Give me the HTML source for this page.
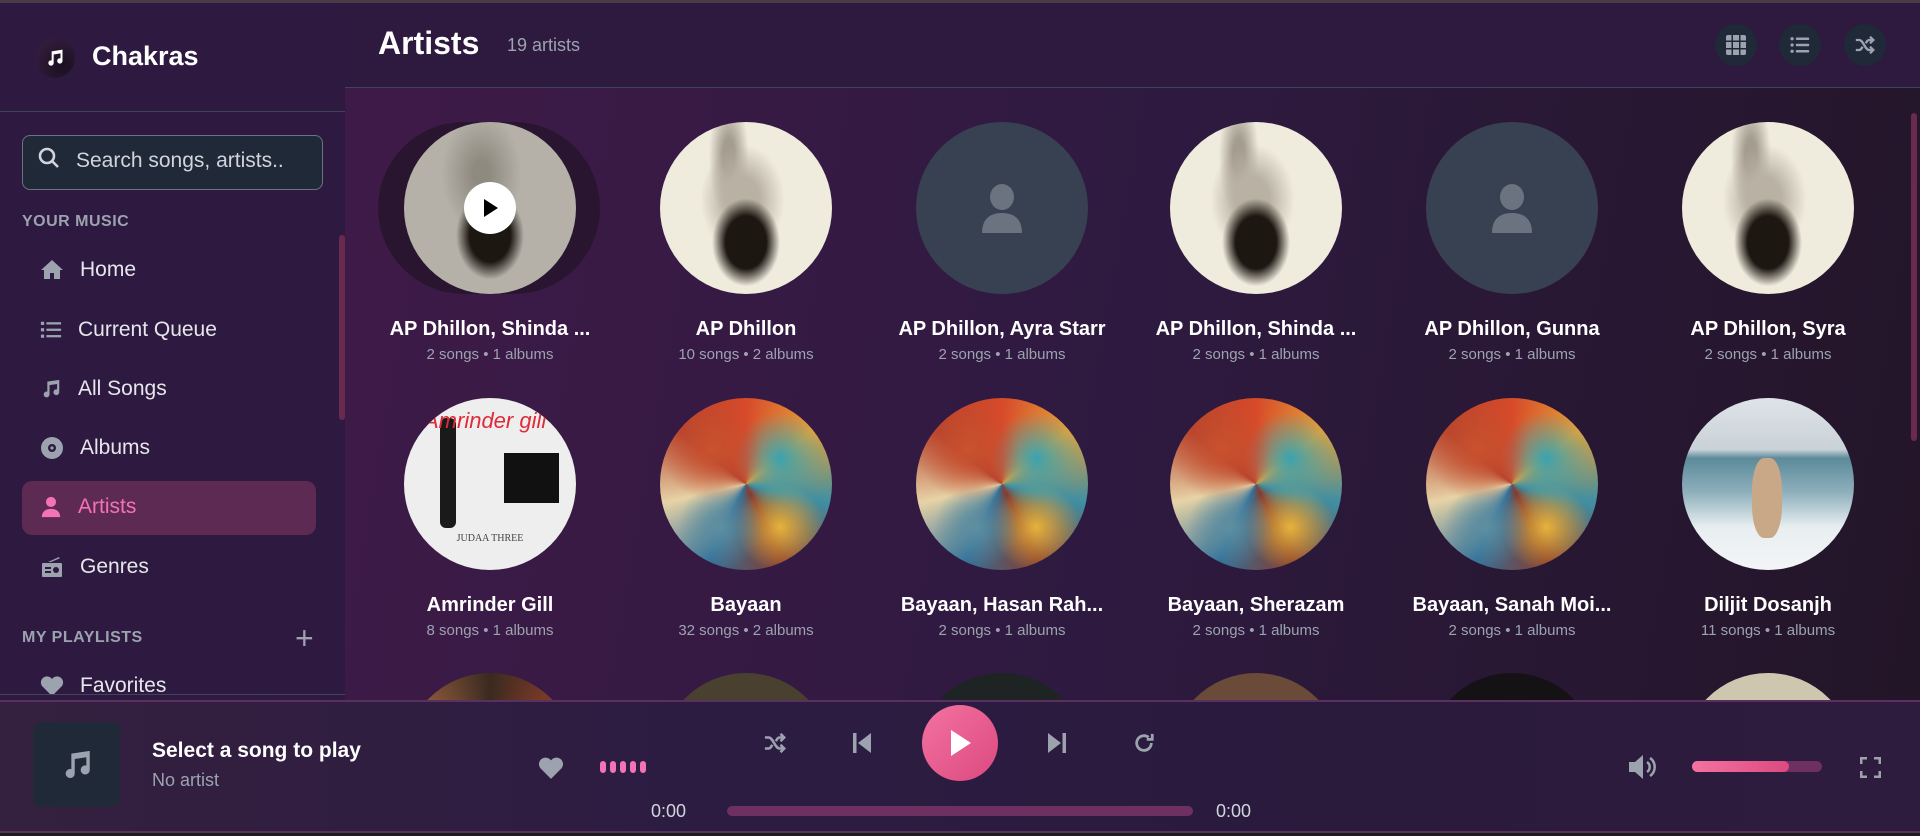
<!DOCTYPE html>
<html><head><meta charset="utf-8"><style>
*{margin:0;padding:0;box-sizing:border-box}
body{width:1920px;height:836px;overflow:hidden;font-family:"Liberation Sans",sans-serif;background:#1a1a1a;position:relative;color:#fff}
.abs{position:absolute}
#topline{left:0;top:0;width:1920px;height:3px;background:#4a3a48}
#side{left:0;top:3px;width:345px;height:697px;background:#2e1a40}
#main{left:345px;top:3px;width:1575px;height:697px;background:linear-gradient(100deg,#3f1a48 0%,#2e1a40 50%,#231528 100%);overflow:hidden}
#mainhead{left:345px;top:3px;width:1575px;height:85px;background:#2d1a3e;border-bottom:1px solid #3c4656}
.nav{position:absolute;left:40px;font-size:21px;color:#e5e7eb;display:flex;align-items:center}
.nav svg{margin-right:16px}
.card{position:absolute;width:256px;text-align:center}
.circ{width:172px;height:172px;border-radius:50%;margin:0 auto;overflow:hidden;position:relative}
.nm{font-size:20px;font-weight:bold;margin-top:24px;white-space:nowrap;color:#fff}
.sb{font-size:15px;color:#9ca3af;margin-top:5px}
.face{background:radial-gradient(ellipse 34px 44px at 50% 70%,#1d1712 60%,transparent 100%),radial-gradient(ellipse 42px 55px at 48% 45%,#b9b1a3 40%,transparent 100%),radial-gradient(ellipse 20px 60px at 40% 20%,#a39c8f 30%,transparent 100%),#efebdd}
.face2{background:radial-gradient(ellipse 34px 44px at 50% 66%,#1d1712 60%,transparent 100%),radial-gradient(ellipse 40px 60px at 45% 30%,#8f8a80 20%,transparent 100%),#b5b1a8}
.ph{background:#374151;display:flex;align-items:center;justify-content:center}
.safar{background:radial-gradient(circle at 30% 30%,#c9522e 0,transparent 30%),radial-gradient(circle at 70% 35%,#3aa2b0 0,transparent 28%),radial-gradient(circle at 35% 75%,#5e8fa0 0,transparent 25%),radial-gradient(circle at 70% 75%,#e6b23c 0,transparent 25%),conic-gradient(#d74a2a,#e5a23a,#3f8fa3,#8a3a2a,#2f6f9a,#e7d3a6,#b3402c,#d74a2a)}
.btn{position:absolute;width:42px;height:42px;border-radius:50%;background:#1f2937;display:flex;align-items:center;justify-content:center}
.r3{position:absolute;top:670px;width:172px;height:172px;border-radius:50%}
</style></head><body>
<div class="abs" id="topline"></div>
<div class="abs" id="side"></div>
<div class="abs" id="main">
<div class="r3" style="left:59px;background:conic-gradient(#3a2a20,#c04a30,#2a5a90,#d08050,#3a2a20)"></div>
<div class="r3" style="left:315px;background:#4a4030"></div>
<div class="r3" style="left:571px;background:#1e2424"></div>
<div class="r3" style="left:825px;background:#6a4a38"></div>
<div class="r3" style="left:1081px;background:#151215"></div>
<div class="r3" style="left:1337px;background:#cfc6b0"></div>
</div>
<div class="abs" id="mainhead"></div>
<div class="abs" style="left:0;top:111px;width:345px;height:1px;background:#3c4656"></div>
<div class="abs" style="left:35px;top:38px;width:40px;height:40px;border-radius:50%;background:radial-gradient(circle at 70% 70%,#1a0f1f,#3a2046);display:flex;align-items:center;justify-content:center">
<svg width="20" height="20" viewBox="0 0 24 24" fill="#fff"><path d="M8 4l13-2v13.5a3.2 3.2 0 1 1-2.4-3.1V6.5L10.4 7.8V18a3.2 3.2 0 1 1-2.4-3.1z"/></svg></div>
<div class="abs" style="left:92px;top:41px;font-size:27px;font-weight:bold">Chakras</div>
<div class="abs" style="left:22px;top:135px;width:301px;height:55px;border:1px solid #6b7280;border-radius:8px;background:#1f2937"></div>
<svg class="abs" style="left:37px;top:146px" width="24" height="24" viewBox="0 0 24 24" fill="none" stroke="#d1d5db" stroke-width="2.6"><circle cx="10" cy="10" r="7"/><path d="M15 15l6 6"/></svg>
<div class="abs" style="left:76px;top:149px;font-size:21px;color:#d1d5db">Search songs, artists..</div>
<div class="abs" style="left:22px;top:213px;font-size:16px;font-weight:bold;color:#9ca3af;letter-spacing:.5px">YOUR MUSIC</div>
<div class="abs" style="left:339px;top:235px;width:6px;height:185px;border-radius:3px;background:#6a2a50"></div>
<div class="abs" style="left:22px;top:481px;width:294px;height:54px;border-radius:10px;background:#5c2a52"></div>
<div class="nav" style="top:258px"><svg width="24" height="24" viewBox="0 0 24 24" fill="#9ca3af"><path d="M12 2L1 12h3v9h6v-6h4v6h6v-9h3z"/></svg>Home</div>
<div class="nav" style="top:318px"><svg width="22" height="22" viewBox="0 0 24 24" fill="#9ca3af"><rect x="1" y="3" width="3.5" height="3.5"/><rect x="1" y="10" width="3.5" height="3.5"/><rect x="1" y="17" width="3.5" height="3.5"/><rect x="7" y="3.5" width="16" height="2.5"/><rect x="7" y="10.5" width="16" height="2.5"/><rect x="7" y="17.5" width="16" height="2.5"/></svg>Current Queue</div>
<div class="nav" style="top:377px"><svg width="22" height="24" viewBox="0 0 24 24" fill="#9ca3af"><path d="M8 4l13-2v13.5a3.2 3.2 0 1 1-2.4-3.1V6.5L10.4 7.8V18a3.2 3.2 0 1 1-2.4-3.1z"/></svg>All Songs</div>
<div class="nav" style="top:436px"><svg width="24" height="24" viewBox="0 0 24 24"><circle cx="12" cy="12" r="11" fill="#9ca3af"/><circle cx="12" cy="12" r="4" fill="#2e1a40"/><circle cx="12" cy="12" r="1.6" fill="#9ca3af"/></svg>Albums</div>
<div class="nav" style="top:495px;color:#f472b6"><svg width="22" height="24" viewBox="0 0 24 24" fill="#f472b6"><circle cx="12" cy="6.5" r="5.5"/><path d="M2 23c0-6 4-9 10-9s10 3 10 9z"/></svg>Artists</div>
<div class="nav" style="top:555px"><svg width="24" height="24" viewBox="0 0 24 24" fill="#9ca3af"><path d="M3 8h18a1 1 0 0 1 1 1v12a1 1 0 0 1-1 1H3a1 1 0 0 1-1-1V9a1 1 0 0 1 1-1zM8 7l11-5 .6 1.4L11 7z"/><circle cx="16" cy="15" r="3" fill="#2e1a40"/><rect x="5" y="12" width="6" height="2" fill="#2e1a40"/><rect x="5" y="16" width="6" height="2" fill="#2e1a40"/></svg>Genres</div>
<div class="abs" style="left:22px;top:629px;font-size:16px;font-weight:bold;color:#9ca3af;letter-spacing:.5px">MY PLAYLISTS</div>
<div class="abs" style="left:295px;top:622px;font-size:32px;color:#9ca3af;line-height:32px">+</div>
<div style="position:absolute;left:0;top:672px;width:345px;height:22px;overflow:hidden"><div class="nav" style="top:2px"><svg width="24" height="22" viewBox="0 0 24 22" fill="#9ca3af"><path d="M12 21L2 11a6 6 0 0 1 10-7 6 6 0 0 1 10 7z"/></svg>Favorites</div></div>
<div class="abs" style="left:0;top:694px;width:345px;height:1px;background:#3c4656"></div>
<div class="abs" style="left:378px;top:25px;font-size:32px;font-weight:bold">Artists</div>
<div class="abs" style="left:507px;top:35px;font-size:18px;color:#9ca3af">19 artists</div>
<div class="btn" style="left:1715px;top:24px"><svg width="20" height="20" viewBox="0 0 20 20" fill="#9ca3af"><rect x="0" y="0" width="20" height="20" rx="2"/><g fill="#1f2937"><rect x="5.5" y="0" width="1.5" height="20"/><rect x="13" y="0" width="1.5" height="20"/><rect x="0" y="5.5" width="20" height="1.5"/><rect x="0" y="13" width="20" height="1.5"/></g></svg></div>
<div class="btn" style="left:1779px;top:24px"><svg width="20" height="20" viewBox="0 0 24 24" fill="#9ca3af"><circle cx="2.5" cy="4.5" r="2"/><circle cx="2.5" cy="12" r="2"/><circle cx="2.5" cy="19.5" r="2"/><rect x="7" y="3" width="16" height="3" rx="1"/><rect x="7" y="10.5" width="16" height="3" rx="1"/><rect x="7" y="18" width="16" height="3" rx="1"/></svg></div>
<div class="btn" style="left:1844px;top:24px"><svg width="20" height="20" viewBox="0 0 24 24" fill="none" stroke="#9ca3af" stroke-width="2.8"><path d="M1 6h4c5 0 7 12 12 12h4M1 18h4c2 0 3-2 4-4M13 10c1-2 2-4 4-4h4"/><path d="M18 2l4 4-4 4M18 14l4 4-4 4"/></svg></div>
<div class="abs" style="left:1911px;top:113px;width:6px;height:328px;border-radius:3px;background:#6a2a50"></div>
<div class="abs" style="left:378px;top:122px;width:222px;height:172px;border-radius:86px;background:#2a1530"></div>
<div class="card" style="left:362px;top:122px"><div class="circ face2"><div style="position:absolute;left:60px;top:60px;width:52px;height:52px;border-radius:50%;background:#fff"><svg style="position:absolute;left:19px;top:16px" width="16" height="20" viewBox="0 0 16 20"><path d="M1 1l14 9-14 9z" fill="#000"/></svg></div></div><div class="nm">AP Dhillon, Shinda ...</div><div class="sb">2 songs • 1 albums</div></div>
<div class="card" style="left:618px;top:122px"><div class="circ face"></div><div class="nm">AP Dhillon</div><div class="sb">10 songs • 2 albums</div></div>
<div class="card" style="left:874px;top:122px"><div class="circ ph"><svg width="44" height="50" viewBox="0 0 44 50" fill="#6b7280"><ellipse cx="22" cy="14" rx="12" ry="13"/><path d="M2 50c0-14 8-20 20-20s20 6 20 20z"/></svg></div><div class="nm">AP Dhillon, Ayra Starr</div><div class="sb">2 songs • 1 albums</div></div>
<div class="card" style="left:1128px;top:122px"><div class="circ face"></div><div class="nm">AP Dhillon, Shinda ...</div><div class="sb">2 songs • 1 albums</div></div>
<div class="card" style="left:1384px;top:122px"><div class="circ ph"><svg width="44" height="50" viewBox="0 0 44 50" fill="#6b7280"><ellipse cx="22" cy="14" rx="12" ry="13"/><path d="M2 50c0-14 8-20 20-20s20 6 20 20z"/></svg></div><div class="nm">AP Dhillon, Gunna</div><div class="sb">2 songs • 1 albums</div></div>
<div class="card" style="left:1640px;top:122px"><div class="circ face"></div><div class="nm">AP Dhillon, Syra</div><div class="sb">2 songs • 1 albums</div></div>
<div class="card" style="left:362px;top:398px"><div class="circ" style="background:#eeeeee"><div style="position:absolute;left:36px;top:20px;width:16px;height:110px;background:#1a1a1a;border-radius:6px"></div><div style="position:absolute;left:100px;top:55px;width:55px;height:50px;background:#111"></div><div style="position:absolute;left:20px;top:10px;font-size:22px;color:#e02a3a;font-style:italic">Amrinder gill</div><div style="position:absolute;left:0;width:172px;top:135px;font-size:10px;color:#444;font-family:'Liberation Serif',serif">JUDAA THREE</div></div><div class="nm">Amrinder Gill</div><div class="sb">8 songs • 1 albums</div></div>
<div class="card" style="left:618px;top:398px"><div class="circ safar"></div><div class="nm">Bayaan</div><div class="sb">32 songs • 2 albums</div></div>
<div class="card" style="left:874px;top:398px"><div class="circ safar"></div><div class="nm">Bayaan, Hasan Rah...</div><div class="sb">2 songs • 1 albums</div></div>
<div class="card" style="left:1128px;top:398px"><div class="circ safar"></div><div class="nm">Bayaan, Sherazam</div><div class="sb">2 songs • 1 albums</div></div>
<div class="card" style="left:1384px;top:398px"><div class="circ safar"></div><div class="nm">Bayaan, Sanah Moi...</div><div class="sb">2 songs • 1 albums</div></div>
<div class="card" style="left:1640px;top:398px"><div class="circ" style="background:linear-gradient(180deg,#dfe3e8 0%,#c9d2d8 30%,#5b8a9a 35%,#8fb0bc 55%,#e8eef0 75%,#f3f5f6 100%)"><div style="position:absolute;left:70px;top:60px;width:30px;height:80px;border-radius:40%;background:#c9a888"></div></div><div class="nm">Diljit Dosanjh</div><div class="sb">11 songs • 1 albums</div></div>
<div class="abs" style="left:0;top:700px;width:1920px;height:133px;background:linear-gradient(90deg,#34203f,#2c1c42 40%,#2a1a3c 70%,#2e1c3e);border-top:2px solid #5a3060;border-bottom:2px solid #5a3060"></div>
<div class="abs" style="left:0;top:833px;width:1920px;height:3px;background:#1c1c1c"></div>
<div class="abs" style="left:33px;top:722px;width:87px;height:85px;border-radius:8px;background:#1f2937;display:flex;align-items:center;justify-content:center"><svg width="34" height="34" viewBox="0 0 24 24" fill="#9ca3af"><path d="M8 4l13-2v13.5a3.2 3.2 0 1 1-2.4-3.1V6.5L10.4 7.8V18a3.2 3.2 0 1 1-2.4-3.1z"/></svg></div>
<div class="abs" style="left:152px;top:739px;font-size:21px;font-weight:bold">Select a song to play</div>
<div class="abs" style="left:152px;top:770px;font-size:18px;color:#9ca3af">No artist</div>
<svg class="abs" style="left:538px;top:756px" width="26" height="24" viewBox="0 0 24 22" fill="#9ca3af"><path d="M12 21L2 11a6 6 0 0 1 10-7 6 6 0 0 1 10 7z"/></svg>
<div class="abs" style="left:600px;top:761px;display:flex;gap:4px"><i style="width:6px;height:12px;border-radius:3px;background:#f472b6;display:block"></i><i style="width:6px;height:12px;border-radius:3px;background:#f472b6;display:block"></i><i style="width:6px;height:12px;border-radius:3px;background:#f472b6;display:block"></i><i style="width:6px;height:12px;border-radius:3px;background:#f472b6;display:block"></i><i style="width:6px;height:12px;border-radius:3px;background:#f472b6;display:block"></i></div>
<svg class="abs" style="left:764px;top:732px" width="22" height="22" viewBox="0 0 24 24" fill="none" stroke="#9ca3af" stroke-width="2.8"><path d="M1 6h4c5 0 7 12 12 12h4M1 18h4c2 0 3-2 4-4M13 10c1-2 2-4 4-4h4"/><path d="M18 2l4 4-4 4M18 14l4 4-4 4"/></svg>
<svg class="abs" style="left:852px;top:732px" width="20" height="22" viewBox="0 0 20 22" fill="#9ca3af"><rect x="1" y="1" width="3.5" height="20"/><path d="M19 1v20L6 11z"/></svg>
<div class="abs" style="left:922px;top:705px;width:76px;height:76px;border-radius:50%;background:linear-gradient(135deg,#f472a0,#db4a80)"><svg style="position:absolute;left:28px;top:24px" width="22" height="28" viewBox="0 0 22 28"><path d="M1 1l20 13L1 27z" fill="#fff"/></svg></div>
<svg class="abs" style="left:1047px;top:732px" width="20" height="22" viewBox="0 0 20 22" fill="#9ca3af"><rect x="15.5" y="1" width="3.5" height="20"/><path d="M1 1v20l13-10z"/></svg>
<svg class="abs" style="left:1133px;top:731px" width="22" height="24" viewBox="0 0 24 24" fill="none" stroke="#9ca3af" stroke-width="3"><path d="M20 12a8 8 0 1 1-3-6.2"/><path d="M21 2v6h-6"/></svg>
<div class="abs" style="left:651px;top:801px;font-size:18px;color:#d1d5db">0:00</div>
<div class="abs" style="left:727px;top:806px;width:466px;height:10px;border-radius:5px;background:#6e3060"></div>
<div class="abs" style="left:1216px;top:801px;font-size:18px;color:#d1d5db">0:00</div>
<svg class="abs" style="left:1628px;top:754px" width="30" height="26" viewBox="0 0 30 26" fill="#9ca3af"><path d="M1 8h6l8-7v24l-8-7H1z"/><path d="M19 8a6 6 0 0 1 0 10M22 4a11 11 0 0 1 0 18" fill="none" stroke="#9ca3af" stroke-width="2.5"/></svg>
<div class="abs" style="left:1692px;top:761px;width:130px;height:11px;border-radius:6px;background:#6e3060"></div>
<div class="abs" style="left:1692px;top:761px;width:97px;height:11px;border-radius:6px;background:linear-gradient(90deg,#f472a0,#db4a80)"></div>
<svg class="abs" style="left:1860px;top:757px" width="21" height="21" viewBox="0 0 21 21" fill="none" stroke="#9ca3af" stroke-width="3"><path d="M1 7V1h6M14 1h6v6M20 14v6h-6M7 20H1v-6"/></svg>
</body></html>
